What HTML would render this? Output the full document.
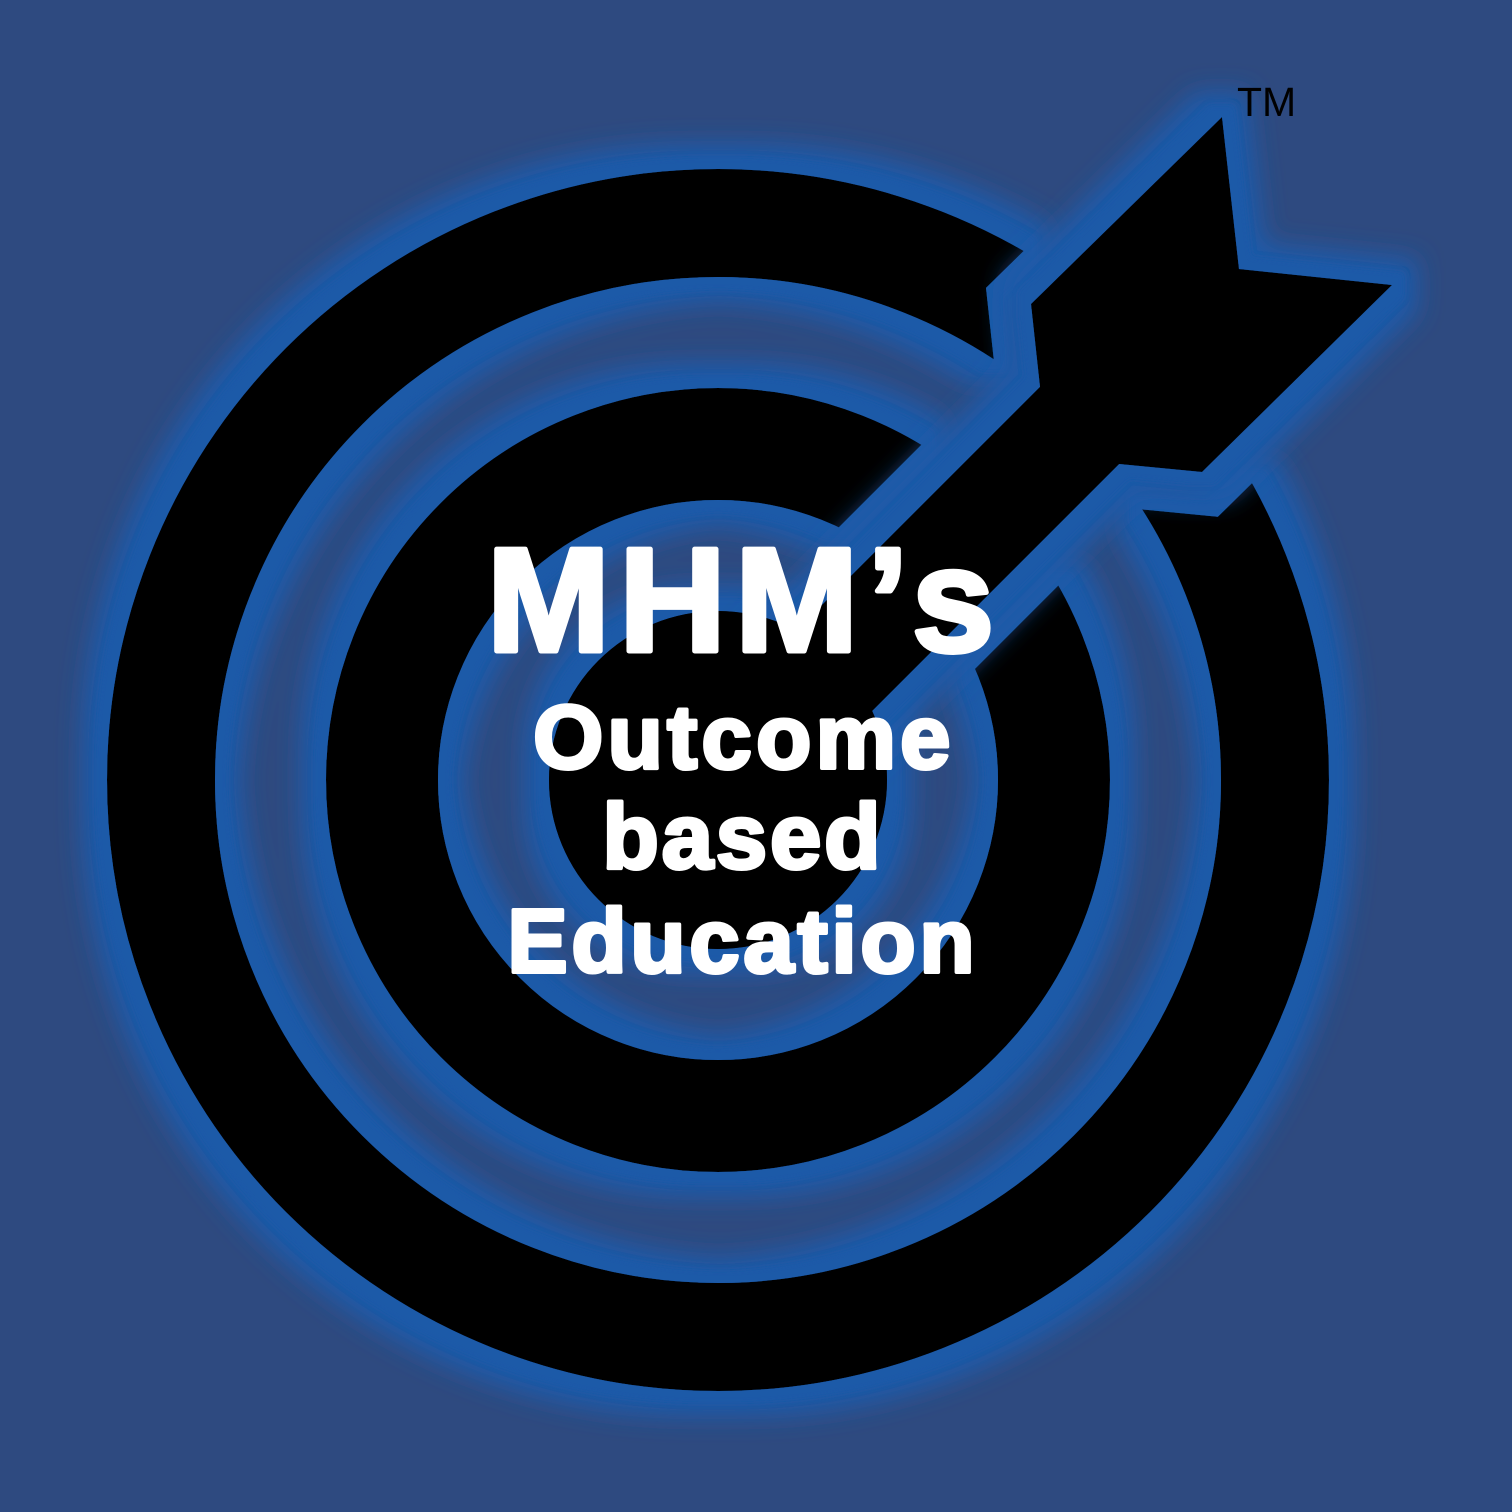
<!DOCTYPE html>
<html><head><meta charset="utf-8"><style>
html,body{margin:0;padding:0;background:#2e4a80;}
svg{display:block}
</style></head><body>
<svg width="1512" height="1512" viewBox="0 0 1512 1512" xmlns="http://www.w3.org/2000/svg">
<defs>
<filter id="glow" x="-20%" y="-20%" width="140%" height="140%">
  <feMorphology in="SourceAlpha" operator="dilate" radius="26" result="d2"/>
  <feGaussianBlur in="d2" stdDeviation="12" result="b2"/>
  <feFlood flood-color="#1f5aa8" result="c"/>
  <feComposite in="c" in2="b2" operator="in" result="g2"/>
  <feMorphology in="SourceAlpha" operator="dilate" radius="12" result="d1"/>
  <feGaussianBlur in="d1" stdDeviation="3" result="b1"/>
  <feComposite in="c" in2="b1" operator="in" result="g1"/>
  <feMerge><feMergeNode in="g2"/><feMergeNode in="g1"/><feMergeNode in="SourceGraphic"/></feMerge>
</filter>
<mask id="cut" maskUnits="userSpaceOnUse" x="0" y="0" width="1512" height="1512">
  <rect width="1512" height="1512" fill="#fff"/>
  <polygon points="1222,117 1239,269 1392,285 1202,472 1119,464 760,823 680,747 1040,387 1031,304" fill="#000" stroke="#000" stroke-width="86" stroke-linejoin="miter"/>
</mask>
</defs>
<rect width="1512" height="1512" fill="#2e4a80"/>
<g filter="url(#glow)">
  <g mask="url(#cut)">
    <circle cx="718" cy="780" r="557" fill="none" stroke="#000" stroke-width="108"/>
    <circle cx="718" cy="780" r="336" fill="none" stroke="#000" stroke-width="112"/>
  </g>
  <circle cx="718" cy="780" r="169" fill="#000"/>
</g>
<g filter="url(#glow)">
  <polygon points="1222,117 1239,269 1392,285 1202,472 1119,464 760,823 680,747 1040,387 1031,304" fill="#000"/>
</g>
<circle cx="718" cy="780" r="169" fill="#000"/>
<polygon points="1119,464 760,823 680,747 1040,387" fill="#000"/>
<g font-family="'Liberation Sans', Arial, sans-serif" font-weight="bold" fill="#fff" stroke="#fff" stroke-linejoin="round" text-anchor="middle">
  <text x="745" y="651" font-size="148" letter-spacing="9" stroke-width="5">MHM’s</text>
  <text x="744" y="768" font-size="90" letter-spacing="4.5" stroke-width="4">Outcome</text>
  <text x="743" y="868" font-size="92" letter-spacing="3" stroke-width="4">based</text>
  <text x="743" y="972" font-size="90" letter-spacing="4" stroke-width="4">Education</text>
</g>
<text x="1237" y="116" font-family="'Liberation Sans', Arial, sans-serif" font-size="41" fill="#000">TM</text>
</svg>
</body></html>
